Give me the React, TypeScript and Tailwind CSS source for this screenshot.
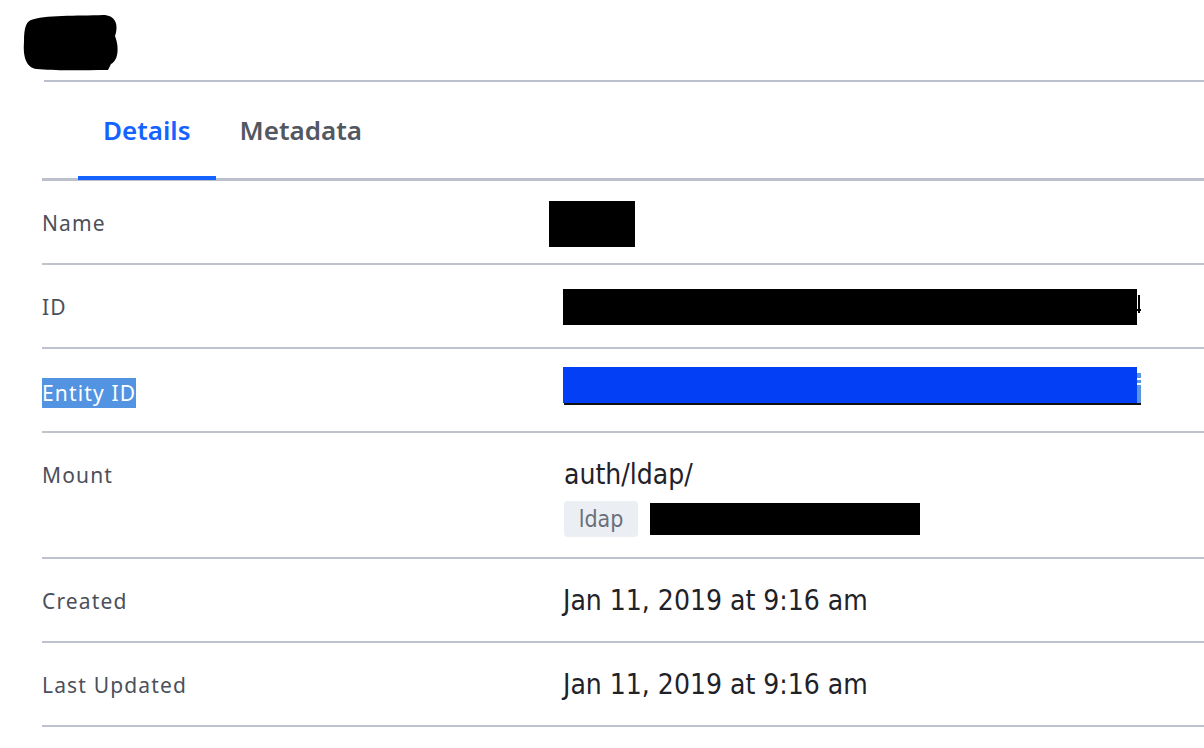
import React from "react";

const Row = ({
  label,
  children,
  labelNode,
  minH = "min-h-[84px]",
}: {
  label?: string;
  children: React.ReactNode;
  labelNode?: React.ReactNode;
  minH?: string;
}) => (
  <div className={`grid grid-cols-[521px_1fr] border-b-2 border-[#bfc3ce] ${minH}`}>
    <div className="pt-[29px] text-[21px] leading-[27px] tracking-[0.055em] text-[#4b505a] font-['Noto_Sans',sans-serif]">
      {labelNode ?? label}
    </div>
    <div>{children}</div>
  </div>
);

const valueFont =
  "font-['DejaVu_Sans_Condensed','DejaVu_Sans',sans-serif] [font-stretch:condensed] text-[#1f2229]";

export default function App() {
  return (
    <div className="w-[1204px] h-[748px] bg-white overflow-hidden font-['Noto_Sans',sans-serif]">
      {/* header */}
      <div className="h-[80px] pl-[23px] pt-[14px]">
        <svg width="96" height="58" viewBox="0 0 96 58">
          <path
            d="M8 6 C 20 1, 55 2, 80 1 C 92 1, 96 10, 92 22 C 96 32, 96 46, 88 50 L 85 56 C 60 56, 30 57, 14 55 C 2 54, 0 40, 1 28 C 1 14, 3 8, 8 6 Z"
            fill="#000"
          />
        </svg>
      </div>
      <div className="ml-[42px]">
        <div className="h-[2px] bg-[#bcc0cc] ml-[2px]" />
        {/* tabs */}
        <div className="h-[96px] flex pl-[36px]">
          <div className="relative h-full px-[25px] flex items-center">
            <span className="text-[26px] font-semibold text-[#1563ff] leading-none">Details</span>
            <div className="absolute left-0 right-0 bottom-[-2px] h-[4px] bg-[#1563ff] z-10" />
          </div>
          <div className="relative h-full px-[24px] flex items-center">
            <span className="text-[26px] font-semibold text-[#525761] leading-none">Metadata</span>
          </div>
        </div>
        <div className="h-[3px] bg-[#bcc0cc]" />

        {/* rows */}
        <Row label="Name" minH="min-h-[84px]">
          <div className="pt-[20px] -ml-[14px]">
            <div className="w-[86px] h-[46px] bg-black" />
          </div>
        </Row>
        <Row label="ID">
          <div className="pt-[24px] flex items-start">
            <div className="w-[574px] h-[36px] bg-black" />
            <div className="relative w-[5px] h-[36px]">
              <div className="absolute left-[1px] top-[6px] w-[2px] h-[18px] bg-black" />
              <div className="absolute left-0 top-[20px] w-[4px] h-[2px] bg-black" />
            </div>
          </div>
        </Row>
        <Row
          labelNode={
            <span className="bg-[#5294e2] text-white py-[1px] inline-block leading-[28px]">Entity ID</span>
          }
        >
          <div className="pt-[18px]">
            <div className="flex items-end w-[578px]">
              <div className="w-[574px] h-[36px] bg-[#0340f5]" />
              <div className="w-[4px] h-[30px] bg-[#5a97e3] flex flex-col gap-[3px] pt-[5px]">
                <div className="h-[2px] bg-white" />
                <div className="h-[2px] bg-white" />
              </div>
            </div>
            <div className="ml-[1px] w-[577px] h-[2px] bg-[#111]" />
          </div>
        </Row>
        <Row label="Mount" minH="min-h-[126px]">
          <div className="pt-[26px] pl-[1px]">
            <div className={`${valueFont} text-[28px] leading-[32px]`}>auth/ldap/</div>
            <div className="mt-[10px] flex items-center gap-[12px]">
              <span
                className={`font-['DejaVu_Sans_Condensed','DejaVu_Sans',sans-serif] [font-stretch:condensed] inline-flex items-center justify-center w-[74px] h-[36px] rounded-[4px] bg-[#ebeef2] text-[#6a707b] text-[23px]`}
              >
                ldap
              </span>
              <div className="w-[270px] h-[32px] bg-black" />
            </div>
          </div>
        </Row>
        <Row label="Created">
          <div className={`pt-[26px] ${valueFont} text-[28px] leading-[32px]`}>Jan 11, 2019 at 9:16 am</div>
        </Row>
        <Row label="Last Updated">
          <div className={`pt-[26px] ${valueFont} text-[28px] leading-[32px]`}>Jan 11, 2019 at 9:16 am</div>
        </Row>
      </div>
    </div>
  );
}
